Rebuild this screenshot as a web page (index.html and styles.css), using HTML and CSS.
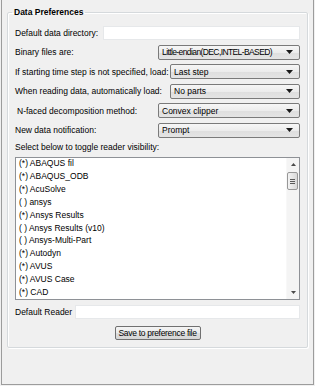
FILE: index.html
```html
<!DOCTYPE html>
<html lang="en">
<head>
    <meta charset="UTF-8">
    <meta name="viewport" content="width=device-width, initial-scale=1.0">
    <title>Data Preferences</title>
    <link rel="stylesheet" href="styles.css">
</head>
<body>
    <div class="window">
        <fieldset class="group">
            <legend>Data Preferences</legend>

            <!-- Top settings -->
            <div class="row">
                <span class="label">Default data directory:</span>
                <input type="text" class="field field-dir">
            </div>
            <div class="row">
                <span class="label">Binary files are:</span>
                <div class="combo combo-wide">
                    <span class="combo-text tight">Little-endian(DEC,INTEL-BASED)</span>
                    <svg class="arrow" width="7" height="4" viewBox="0 0 7 4"><path d="M0 0h7L3.5 4z" fill="#1a1a1a"/></svg>
                </div>
            </div>
            <div class="row">
                <span class="label">If starting time step is not specified, load:</span>
                <div class="combo combo-narrow">
                    <span class="combo-text">Last step</span>
                    <svg class="arrow" width="7" height="4" viewBox="0 0 7 4"><path d="M0 0h7L3.5 4z" fill="#1a1a1a"/></svg>
                </div>
            </div>
            <div class="row">
                <span class="label">When reading data, automatically load:</span>
                <div class="combo combo-narrow">
                    <span class="combo-text">No parts</span>
                    <svg class="arrow" width="7" height="4" viewBox="0 0 7 4"><path d="M0 0h7L3.5 4z" fill="#1a1a1a"/></svg>
                </div>
            </div>
            <div class="row">
                <span class="label label-indent">N-faced decomposition method:</span>
                <div class="combo combo-wide">
                    <span class="combo-text">Convex clipper</span>
                    <svg class="arrow" width="7" height="4" viewBox="0 0 7 4"><path d="M0 0h7L3.5 4z" fill="#1a1a1a"/></svg>
                </div>
            </div>
            <div class="row">
                <span class="label">New data notification:</span>
                <div class="combo combo-wide">
                    <span class="combo-text">Prompt</span>
                    <svg class="arrow" width="7" height="4" viewBox="0 0 7 4"><path d="M0 0h7L3.5 4z" fill="#1a1a1a"/></svg>
                </div>
            </div>

            <!-- Reader list -->
            <div class="row row-caption">
                <span class="label">Select below to toggle reader visibility:</span>
            </div>
            <div class="listbox">
                <ul class="reader-list">
                    <li>(*) ABAQUS fil</li>
                    <li>(*) ABAQUS_ODB</li>
                    <li>(*) AcuSolve</li>
                    <li>( ) ansys</li>
                    <li>(*) Ansys Results</li>
                    <li>( ) Ansys Results (v10)</li>
                    <li>( ) Ansys-Multi-Part</li>
                    <li>(*) Autodyn</li>
                    <li>(*) AVUS</li>
                    <li>(*) AVUS Case</li>
                    <li>(*) CAD</li>
                </ul>
                <div class="scrollbar">
                    <div class="scroll-btn">
                        <svg width="5" height="3" viewBox="0 0 5 3"><path d="M0 3h5L2.5 0z" fill="#4a4a4a"/></svg>
                    </div>
                    <div class="scroll-track">
                        <div class="scroll-thumb">
                            <i></i><i></i><i></i>
                        </div>
                    </div>
                    <div class="scroll-btn">
                        <svg width="5" height="3" viewBox="0 0 5 3"><path d="M0 0h5L2.5 3z" fill="#4a4a4a"/></svg>
                    </div>
                </div>
            </div>

            <div class="row row-reader">
                <span class="label">Default Reader</span>
                <input type="text" class="field field-reader">
            </div>

            <div class="actions">
                <button class="save-btn">Save to preference file</button>
            </div>
        </fieldset>
    </div>
</body>
</html>
```

FILE: styles.css
```css
body {
    margin: 0;
    padding: 0;
    background-color: #f0f0f0;
    font-family: "Liberation Sans", Arial, sans-serif;
    font-size: 8.5px;
    color: #000;
}
.window {
    box-sizing: border-box;
    width: 313px;
    height: 385px;
    margin-left: 1px;
    background-color: #f0f0f0;
    border-left: 1px solid #9c9c9c;
    border-right: 1px solid #9c9c9c;
    border-bottom: 1px solid #9c9c9c;
    padding-top: 6px;
}
.group {
    margin: 0 5px;
    padding: 5px 7px 7px 7px;
    border: 1px solid #d5d9dc;
    border-radius: 2px;
    box-shadow: inset 1px 1px 0 #fff, 1px 1px 0 #fff;
    min-inline-size: 0;
}
.group legend {
    margin-left: -3px;
    padding: 0 2px;
    font-weight: bold;
    line-height: 12px;
}
.row {
    display: flex;
    align-items: center;
    justify-content: space-between;
    height: 19.5px;
}
.label {
    white-space: nowrap;
}
.label-indent {
    padding-left: 2px;
}
.field {
    box-sizing: border-box;
    height: 14px;
    margin: 0;
    padding: 0 3px;
    border: 1px solid #e6e8ea;
    background: #fff;
    font: inherit;
}
.field-dir {
    width: 197px;
}
.field-reader {
    width: 225px;
}
.combo {
    box-sizing: border-box;
    display: flex;
    align-items: center;
    justify-content: space-between;
    height: 15px;
    padding: 0 6px 0 3px;
    border: 1px solid #7a7a7a;
    border-radius: 2px;
    background: linear-gradient(#f6f6f6, #ececec 50%, #dedede 51%, #e4e4e4);
    white-space: nowrap;
    overflow: hidden;
}
.combo-text.tight {
    letter-spacing: -0.6px;
}
.arrow {
    flex-shrink: 0;
}
.combo-wide {
    width: 142px;
}
.combo-narrow {
    width: 130px;
}
.row-caption {
    height: 14px;
}
.listbox {
    box-sizing: border-box;
    display: flex;
    height: 143px;
    margin-top: 3px;
    border: 1px solid #8e9196;
    background: #fff;
}
.reader-list {
    flex: 1;
    list-style: none;
    margin: -1px 0 0 0;
    padding: 0 0 0 3px;
}
.reader-list li {
    line-height: 12.9px;
    white-space: nowrap;
}
.scrollbar {
    display: flex;
    flex-direction: column;
    width: 12px;
    background: #f4f4f4;
    border-left: 1px solid #f8f8f8;
}
.scroll-btn {
    display: flex;
    align-items: center;
    justify-content: center;
    height: 13px;
}
.scroll-track {
    flex: 1;
    padding-top: 1px;
}
.scroll-thumb {
    box-sizing: border-box;
    display: flex;
    flex-direction: column;
    align-items: center;
    justify-content: center;
    gap: 1px;
    width: 11px;
    height: 18px;
    border: 1px solid #979797;
    border-radius: 2px;
    background: linear-gradient(90deg, #f3f3f3, #e6e6e6 50%, #d8d8d8);
}
.scroll-thumb i {
    display: block;
    width: 5px;
    height: 1px;
    background: #5a5a5a;
}
.row-reader {
    height: 18px;
    margin-top: 3px;
}
.actions {
    display: flex;
    justify-content: center;
    margin-top: 5px;
}
.save-btn {
    box-sizing: border-box;
    width: 86px;
    height: 14px;
    padding: 0;
    border: 1px solid #707070;
    border-radius: 2px;
    background: linear-gradient(#f4f4f4, #ebebeb 50%, #dddddd 51%, #d6d6d6);
    font: inherit;
    color: #000;
    line-height: 12px;
    letter-spacing: -0.3px;
    white-space: nowrap;
}
```
